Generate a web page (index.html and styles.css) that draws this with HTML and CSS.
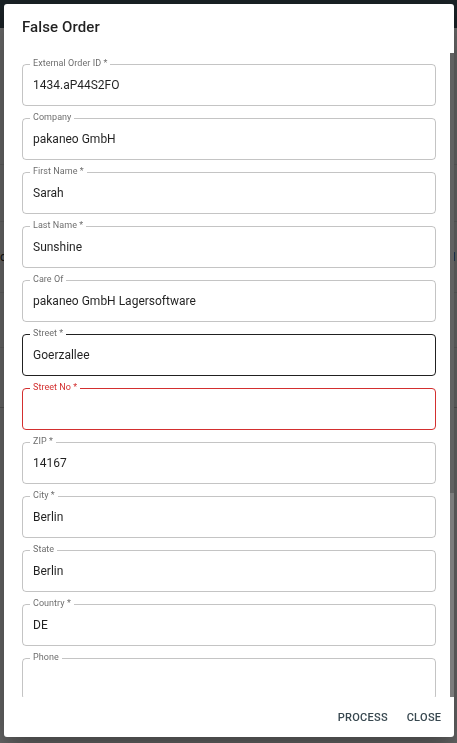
FILE: index.html
```html
<!DOCTYPE html>
<html lang="de">
<head>
<meta charset="utf-8">
<title>False Order</title>
<link rel="stylesheet" href="styles.css">
</head>
<body>
<div class="page">
  <header class="appbar"></header>
  <div class="toolbar"></div>
  <div class="table">
    <div class="row row-a"></div>
    <div class="row row-b"></div>
    <div class="row row-c"><span class="cell-left">o</span><span class="cell-right">1</span></div>
    <div class="row row-d"></div>
    <div class="row row-e"></div>
  </div>
</div>
<div class="backdrop"></div>
<div class="dialog" role="dialog" aria-labelledby="dlg-title">
  <h2 class="dialog-title" id="dlg-title">False Order</h2>
  <div class="dialog-body">
    <div class="dialog-content">
      <fieldset class="field"><legend>External Order ID *</legend><input class="field-input" type="text" value="1434.aP44S2FO"></fieldset>
      <fieldset class="field"><legend>Company</legend><input class="field-input" type="text" value="pakaneo GmbH"></fieldset>
      <fieldset class="field"><legend>First Name *</legend><input class="field-input" type="text" value="Sarah"></fieldset>
      <fieldset class="field"><legend>Last Name *</legend><input class="field-input" type="text" value="Sunshine"></fieldset>
      <fieldset class="field"><legend>Care Of</legend><input class="field-input" type="text" value="pakaneo GmbH Lagersoftware"></fieldset>
      <fieldset class="field field-hover"><legend>Street *</legend><input class="field-input" type="text" value="Goerzallee"></fieldset>
      <fieldset class="field field-error"><legend>Street No *</legend><input class="field-input" type="text" value=""></fieldset>
      <fieldset class="field"><legend>ZIP *</legend><input class="field-input" type="text" value="14167"></fieldset>
      <fieldset class="field"><legend>City *</legend><input class="field-input" type="text" value="Berlin"></fieldset>
      <fieldset class="field"><legend>State</legend><input class="field-input" type="text" value="Berlin"></fieldset>
      <fieldset class="field"><legend>Country *</legend><input class="field-input" type="text" value="DE"></fieldset>
      <fieldset class="field"><legend>Phone</legend><input class="field-input" type="text" value=""></fieldset>
    </div>
    <div class="scrollbar" aria-hidden="true"><div class="scrollbar-thumb"></div></div>
  </div>
  <div class="dialog-actions">
    <button class="btn" type="button">Process</button>
    <button class="btn" type="button">Close</button>
  </div>
</div>
</body>
</html>
```
FILE: styles.css
```css
* { box-sizing: border-box; }

html, body {
  margin: 0;
  height: 100%;
  overflow: hidden;
}

body {
  font-family: Roboto, "Liberation Sans", Arial, sans-serif;
  background: #dadada;
  color: rgba(0, 0, 0, 0.87);
}

/* underlying page (dimmed by backdrop) */
.page {
  display: flex;
  flex-direction: column;
}

.appbar {
  height: 28px;
  background: #37474f;
}

.toolbar {
  height: 22px;
  background: #e6e6e6;
}

.table {
  display: flex;
  flex-direction: column;
}

.row {
  border-bottom: 1px solid #c8c8c8;
  display: flex;
  justify-content: space-between;
  align-items: center;
  font-size: 12px;
}

.row-a { height: 115px; }
.row-b { height: 57px; }
.row-c { height: 71px; padding: 0 0 0 0; }
.row-d { height: 55px; }
.row-e { height: 60px; border-bottom-color: #b0b0b0; }

.cell-left, .cell-right { color: #222; }

.backdrop {
  position: fixed;
  inset: 0;
  background: rgba(0, 0, 0, 0.5);
}

/* dialog */
.dialog {
  position: fixed;
  left: 4px;
  top: 4px;
  width: 450px;
  height: 733px;
  background: #fff;
  border-radius: 3px;
  display: flex;
  flex-direction: column;
  box-shadow: 0 8px 28px 3px rgba(0, 0, 0, 0.2), 0 18px 30px 2px rgba(0, 0, 0, 0.14), 0 7px 34px 6px rgba(0, 0, 0, 0.12);
}

.dialog-title {
  margin: 0;
  padding: 11px 18px 13px;
  font-size: 15px;
  font-weight: 500;
  line-height: 25px;
  color: rgba(0, 0, 0, 0.87);
  letter-spacing: 0.1px;
}

.dialog-body {
  flex: 1;
  min-height: 0;
  display: flex;
}

.dialog-content {
  flex: 1;
  min-width: 0;
  overflow: hidden;
  padding: 6px 14px 15px 18px;
  display: flex;
  flex-direction: column;
  gap: 7px;
}

.scrollbar {
  width: 4px;
  flex-shrink: 0;
  background: #7d7d7d;
}

.scrollbar-thumb {
  height: 440px;
  background: #626262;
}

.field {
  margin: 0;
  padding: 0 10px;
  min-width: 0;
  border: 1px solid rgba(0, 0, 0, 0.23);
  border-radius: 4px;
  flex-shrink: 0;
}

.field legend {
  font-size: 9px;
  line-height: 8px;
  padding: 0 3px 3px;
  margin-left: -3px;
  color: rgba(0, 0, 0, 0.6);
  letter-spacing: 0.05px;
}

.field-input {
  display: block;
  width: 100%;
  height: 35px;
  padding: 0 0 5px;
  margin: 0;
  border: 0;
  outline: none;
  background: transparent;
  font-family: Roboto, "Liberation Sans", Arial, sans-serif;
  font-size: 12px;
  line-height: 30px;
  color: rgba(0, 0, 0, 0.87);
}

.field-hover {
  border-color: rgba(0, 0, 0, 0.87);
}

.field-error {
  border-color: #d32f2f;
}

.field-error legend {
  color: #d32f2f;
}

.dialog-actions {
  height: 40px;
  flex-shrink: 0;
  padding: 0 6px;
  display: flex;
  justify-content: flex-end;
  align-items: center;
  gap: 6px;
}

.btn {
  font-family: Roboto, "Liberation Sans", Arial, sans-serif;
  font-size: 11px;
  font-weight: 500;
  letter-spacing: 0.3px;
  line-height: 19px;
  text-transform: uppercase;
  color: #37474f;
  background: transparent;
  border: 0;
  border-radius: 3px;
  padding: 4px 6px;
  min-width: 48px;
  cursor: pointer;
}
```
